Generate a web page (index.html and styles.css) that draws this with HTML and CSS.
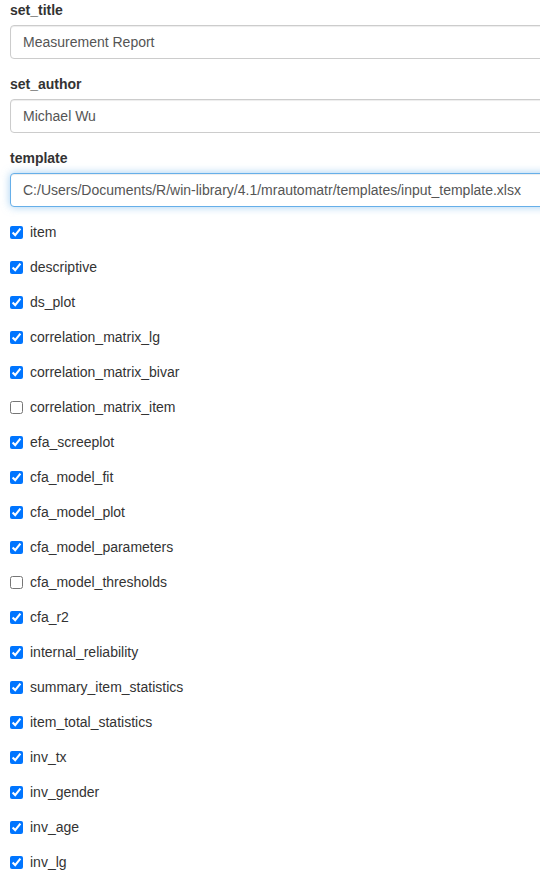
FILE: index.html
```html
<!DOCTYPE html>
<html>
<head>
<meta charset="utf-8">
<link rel="stylesheet" href="styles.css">
</head>
<body>
<div class="panel">
  <div class="form-group">
    <label class="control-label">set_title</label>
    <input class="form-control" type="text" value="Measurement Report" readonly>
  </div>
  <div class="form-group">
    <label class="control-label">set_author</label>
    <input class="form-control" type="text" value="Michael Wu" readonly>
  </div>
  <div class="form-group">
    <label class="control-label">template</label>
    <input class="form-control focused" type="text" value="C:/Users/Documents/R/win-library/4.1/mrautomatr/templates/input_template.xlsx" readonly>
  </div>
  <div class="form-group"><label class="checkbox"><input type="checkbox" checked><span>item</span></label></div>
  <div class="form-group"><label class="checkbox"><input type="checkbox" checked><span>descriptive</span></label></div>
  <div class="form-group"><label class="checkbox"><input type="checkbox" checked><span>ds_plot</span></label></div>
  <div class="form-group"><label class="checkbox"><input type="checkbox" checked><span>correlation_matrix_lg</span></label></div>
  <div class="form-group"><label class="checkbox"><input type="checkbox" checked><span>correlation_matrix_bivar</span></label></div>
  <div class="form-group"><label class="checkbox"><input type="checkbox"><span>correlation_matrix_item</span></label></div>
  <div class="form-group"><label class="checkbox"><input type="checkbox" checked><span>efa_screeplot</span></label></div>
  <div class="form-group"><label class="checkbox"><input type="checkbox" checked><span>cfa_model_fit</span></label></div>
  <div class="form-group"><label class="checkbox"><input type="checkbox" checked><span>cfa_model_plot</span></label></div>
  <div class="form-group"><label class="checkbox"><input type="checkbox" checked><span>cfa_model_parameters</span></label></div>
  <div class="form-group"><label class="checkbox"><input type="checkbox"><span>cfa_model_thresholds</span></label></div>
  <div class="form-group"><label class="checkbox"><input type="checkbox" checked><span>cfa_r2</span></label></div>
  <div class="form-group"><label class="checkbox"><input type="checkbox" checked><span>internal_reliability</span></label></div>
  <div class="form-group"><label class="checkbox"><input type="checkbox" checked><span>summary_item_statistics</span></label></div>
  <div class="form-group"><label class="checkbox"><input type="checkbox" checked><span>item_total_statistics</span></label></div>
  <div class="form-group"><label class="checkbox"><input type="checkbox" checked><span>inv_tx</span></label></div>
  <div class="form-group"><label class="checkbox"><input type="checkbox" checked><span>inv_gender</span></label></div>
  <div class="form-group"><label class="checkbox"><input type="checkbox" checked><span>inv_age</span></label></div>
  <div class="form-group"><label class="checkbox"><input type="checkbox" checked><span>inv_lg</span></label></div>
</div>
</body>
</html>
```
FILE: styles.css
```css
html, body {
  margin: 0;
  padding: 0;
  overflow: hidden;
  background: #fff;
}
body {
  font-family: "Liberation Sans", Arial, sans-serif;
  font-size: 14px;
  line-height: 20px;
  color: #333;
}
.panel {
  padding-left: 10px;
  width: 580px;
  display: flex;
  flex-direction: column;
  gap: 15px;
}
.form-group {
  display: flex;
  flex-direction: column;
}
.control-label {
  display: block;
  font-weight: bold;
  margin-bottom: 5px;
  height: 20px;
}
.form-control {
  box-sizing: border-box;
  width: 100%;
  height: 34px;
  margin: 0;
  padding: 6px 12px;
  font-family: "Liberation Sans", Arial, sans-serif;
  font-size: 14px;
  line-height: 20px;
  color: #555;
  background: #fff;
  border: 1px solid #ccc;
  border-radius: 4px;
  box-shadow: inset 0 1px 1px rgba(0,0,0,.075);
  outline: none;
}
.form-control.focused {
  border-color: #66afe9;
  box-shadow: inset 0 1px 1px rgba(0,0,0,.075), 0 0 8px rgba(102,175,233,.6);
}
.checkbox {
  display: flex;
  align-items: flex-start;
  height: 20px;
  font-weight: normal;
}
.checkbox input {
  width: 13px;
  height: 13px;
  margin: 4px 7px 0 0;
}
```
